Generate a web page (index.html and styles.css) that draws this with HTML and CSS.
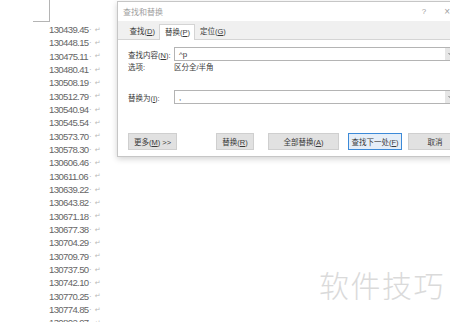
FILE: index.html
```
<html>
  <head>
    <title>查找和替换</title>
    <link rel="stylesheet" href="styles.css">
  </head>
  <body>
    <div class="page">
      <div class="corner"></div>
      <div class="lines">
        <div class="row"><span class="num">130439.45</span><span class="dot">·</span><span class="para">↵</span></div>
        <div class="row"><span class="num">130448.15</span><span class="dot">·</span><span class="para">↵</span></div>
        <div class="row"><span class="num">130475.11</span><span class="dot">·</span><span class="para">↵</span></div>
        <div class="row"><span class="num">130480.41</span><span class="dot">·</span><span class="para">↵</span></div>
        <div class="row"><span class="num">130508.19</span><span class="dot">·</span><span class="para">↵</span></div>
        <div class="row"><span class="num">130512.79</span><span class="dot">·</span><span class="para">↵</span></div>
        <div class="row"><span class="num">130540.94</span><span class="dot">·</span><span class="para">↵</span></div>
        <div class="row"><span class="num">130545.54</span><span class="dot">·</span><span class="para">↵</span></div>
        <div class="row"><span class="num">130573.70</span><span class="dot">·</span><span class="para">↵</span></div>
        <div class="row"><span class="num">130578.30</span><span class="dot">·</span><span class="para">↵</span></div>
        <div class="row"><span class="num">130606.46</span><span class="dot">·</span><span class="para">↵</span></div>
        <div class="row"><span class="num">130611.06</span><span class="dot">·</span><span class="para">↵</span></div>
        <div class="row"><span class="num">130639.22</span><span class="dot">·</span><span class="para">↵</span></div>
        <div class="row"><span class="num">130643.82</span><span class="dot">·</span><span class="para">↵</span></div>
        <div class="row"><span class="num">130671.18</span><span class="dot">·</span><span class="para">↵</span></div>
        <div class="row"><span class="num">130677.38</span><span class="dot">·</span><span class="para">↵</span></div>
        <div class="row"><span class="num">130704.29</span><span class="dot">·</span><span class="para">↵</span></div>
        <div class="row"><span class="num">130709.79</span><span class="dot">·</span><span class="para">↵</span></div>
        <div class="row"><span class="num">130737.50</span><span class="dot">·</span><span class="para">↵</span></div>
        <div class="row"><span class="num">130742.10</span><span class="dot">·</span><span class="para">↵</span></div>
        <div class="row"><span class="num">130770.25</span><span class="dot">·</span><span class="para">↵</span></div>
        <div class="row"><span class="num">130774.85</span><span class="dot">·</span><span class="para">↵</span></div>
        <div class="row"><span class="num">130802.97</span><span class="dot">·</span><span class="para">↵</span></div>
      </div>
    </div>

    <!-- Find and replace window, floating over the document -->
    <div class="dialog">
      <div class="titlebar">
        <span class="title">查找和替换</span>
        <span class="help">?</span>
        <span class="close">×</span>
      </div>
      <div class="tabs">
        <span class="tab">查找(<u>D</u>)</span>
        <span class="tab active">替换(<u>P</u>)</span>
        <span class="tab">定位(<u>G</u>)</span>
      </div>
      <div class="panel">
        <div class="field">
          <span class="label">查找内容(<u>N</u>):</span>
          <div class="combo">
            <span class="value">^p</span>
            <span class="arrow"><svg width="7" height="5" viewBox="0 0 7 5"><polyline points="0.5,1 3.5,4 6.5,1" fill="none" stroke="#777" stroke-width="1"/></svg></span>
          </div>
        </div>
        <div class="options">
          <span class="label">选项:</span>
          <span>区分全/半角</span>
        </div>
        <div class="field replace">
          <span class="label">替换为(<u>I</u>):</span>
          <div class="combo">
            <span class="value">,</span>
            <span class="arrow"><svg width="7" height="5" viewBox="0 0 7 5"><polyline points="0.5,1 3.5,4 6.5,1" fill="none" stroke="#777" stroke-width="1"/></svg></span>
          </div>
        </div>
        <div class="buttons">
          <button class="btn more">更多(<u>M</u>) &gt;&gt;</button>
          <button class="btn one">替换(<u>R</u>)</button>
          <button class="btn all">全部替换(<u>A</u>)</button>
          <button class="btn next">查找下一处(<u>F</u>)</button>
          <button class="btn cancel">取消</button>
        </div>
      </div>
    </div>

    <div class="watermark">软件技巧</div>
  </body>
</html>
```

FILE: styles.css
```
body { margin: 0; background: #fff; overflow: hidden; width: 450px; height: 322px; }

/* document page */
.page { font-family: "Liberation Sans", Arial, sans-serif; }
.corner {
  width: 16px; height: 21px; margin-left: 33px;
  border-right: 1px solid #b4b4b4; border-bottom: 1px solid #b4b4b4;
}
.lines { margin-left: 49px; margin-top: 1px; }
.row { display: flex; align-items: center; height: 13.33px; }
.num {
  width: 39px; text-align: right;
  font-size: 9.6px; letter-spacing: -0.65px; color: #666;
}
.dot { font-size: 8px; color: #aaa; margin-left: 1px; }
.para { font-family: "DejaVu Sans", sans-serif; font-size: 7px; color: #b8b8b8; margin-left: 3px; }

/* dialog */
.dialog {
  position: absolute; left: 117px; top: 1px; width: 346px;
  background: #fff;
  border: 1px solid #c6c6c6;
  box-shadow: 0 2px 6px rgba(0,0,0,0.18);
  font-family: "Liberation Sans", "Noto Sans CJK SC", sans-serif;
  font-size: 7.5px; color: #3a3a3a;
}
.titlebar { display: flex; align-items: center; height: 19px; padding-left: 5px; }
.title { font-size: 8px; color: #a0a0a0; flex: 1; }
.help { color: #a0a0a0; font-size: 8px; margin-right: 18px; }
.close { color: #a0a0a0; font-size: 10px; margin-right: 14px; }

.tabs {
  display: flex; align-items: flex-end; height: 18px;
  padding-left: 7px; background: #f0f0f0;
}
.tab { height: 15px; padding: 2px 4.5px 0; line-height: 12px; box-sizing: border-box; }
.tab.active {
  background: #fff;
  border: 1px solid #d4d4d4; border-bottom: none;
  margin-bottom: -1px; height: 16px; position: relative;
}

.panel { border-top: 1px solid #d4d4d4; padding: 0 0 6px 10px; }
.field { display: flex; align-items: center; margin-top: 7px; }
.field.replace { margin-top: 17px; }
.label { width: 46px; }
.combo {
  display: flex; align-items: center; justify-content: space-between;
  width: 284px; height: 14px; box-sizing: border-box;
  border: 1px solid #b4b4b4; padding-left: 4px;
}
.value { font-size: 8px; }
.arrow {
  display: flex; align-items: center; justify-content: center;
  width: 12px; height: 12px; background: #e6e6e6;
}
.options { display: flex; line-height: 10px; margin-top: 2px; }

.buttons { display: flex; margin-top: 29px; }
.btn {
  height: 17px; padding: 0; margin: 0;
  background: #e1e1e1; border: 1px solid #cfcfcf;
  font-family: inherit; font-size: 7.5px; color: #3a3a3a;
}
.btn.more { width: 49px; }
.btn.one { width: 38px; margin-left: 39px; }
.btn.all { width: 71px; margin-left: 14px; }
.btn.next { width: 54px; margin-left: 9px; border-color: #3c8ad8; background: #e5eef8; }
.btn.cancel { width: 54px; margin-left: 6px; }

.watermark {
  position: absolute; left: 319px; top: 269px;
  font-family: "Noto Sans CJK SC", sans-serif; font-weight: 300;
  font-size: 30px; line-height: 30px; letter-spacing: 1.5px; color: #dadada;
}
```
